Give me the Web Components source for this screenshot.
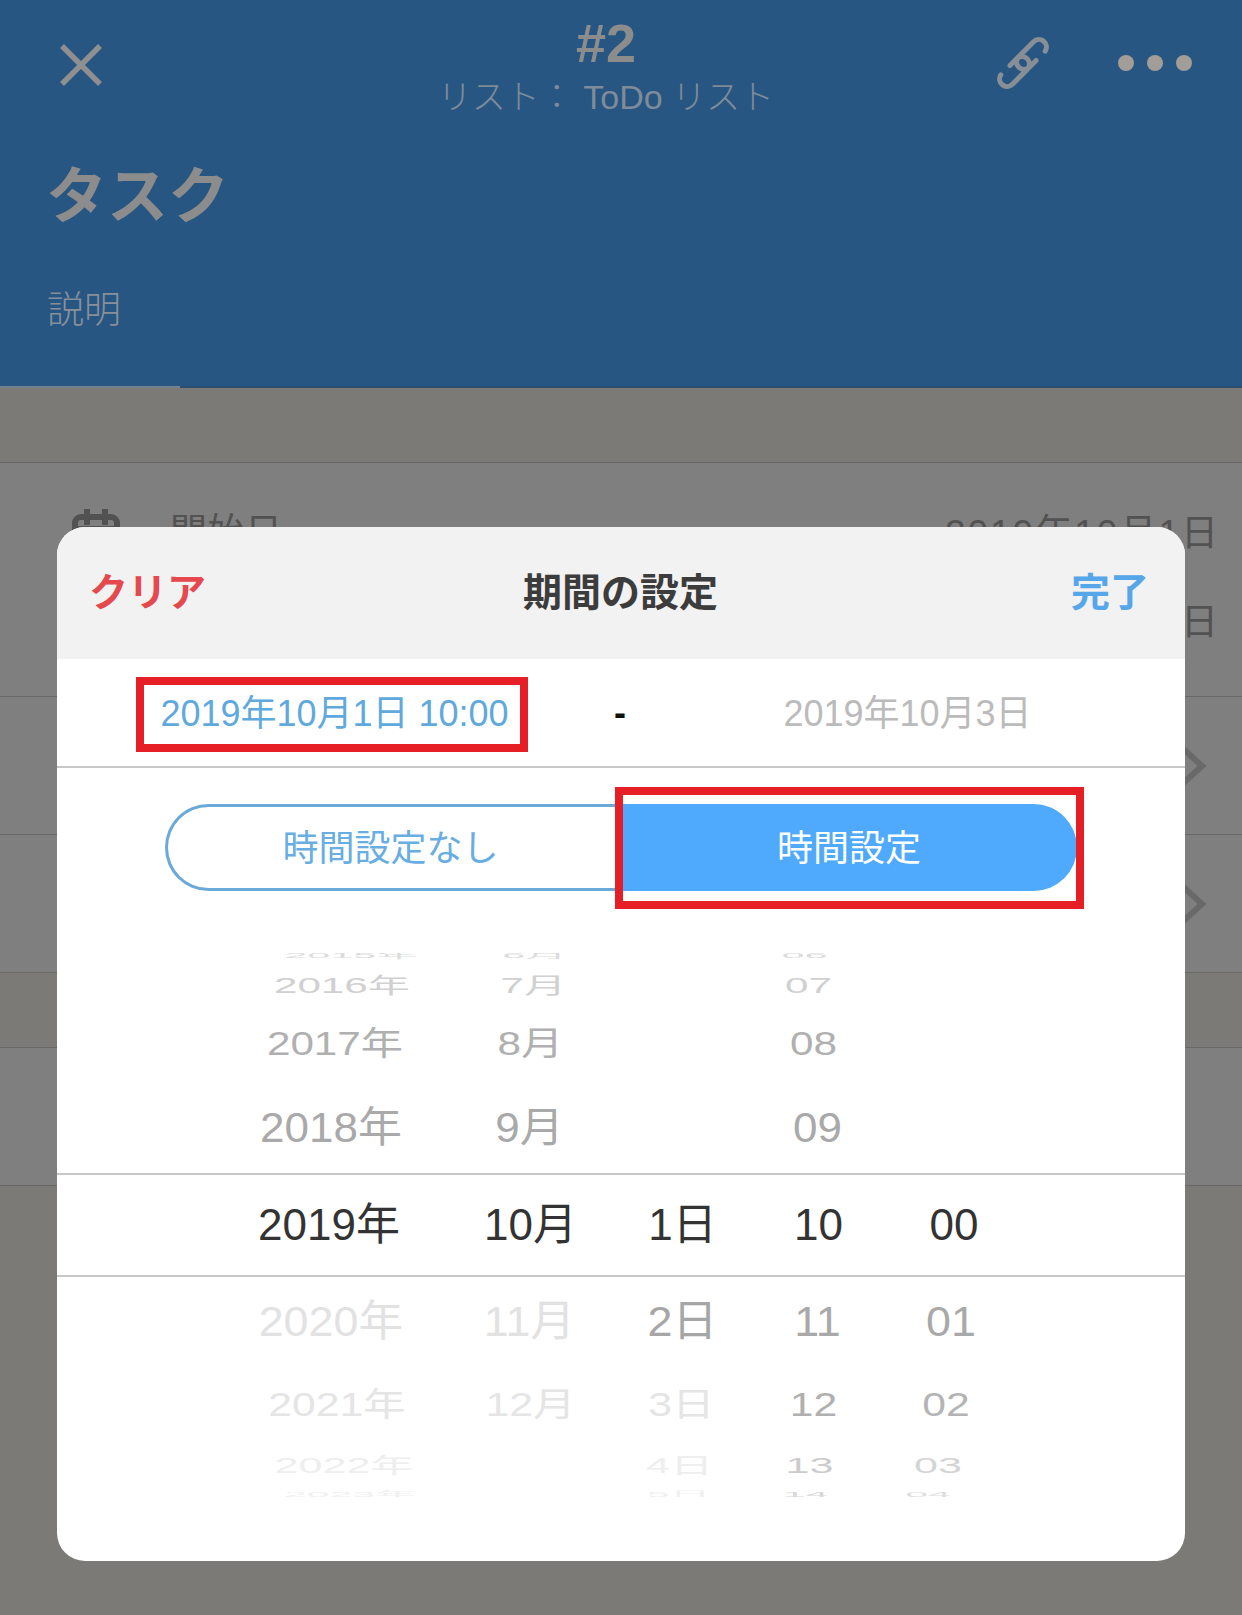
<!DOCTYPE html>
<html lang="ja">
<head>
<meta charset="utf-8">
<title>期間の設定</title>
<style>
  html, body { margin: 0; height: 1615px; overflow: hidden; background: #7b7a77; }
  body { font-family: "Liberation Sans", "Noto Sans CJK JP", sans-serif; }
</style>
</head>
<body>
<task-page>
  <date-modal></date-modal>
</task-page>

<script>
class TaskHeader extends HTMLElement {
  constructor () {
    super()
    this.attachShadow({ mode: 'open' })
  }

  connectedCallback () {
    this.shadowRoot.innerHTML = `
      <style>
        :host { display: block; height: 388px; background: #275682; box-sizing: border-box; position: relative; color: #8c8c8c; }
        .bar { display: grid; grid-template-columns: 370px 354px 1fr; align-items: start; padding: 20px 50px 0 59px; height: 147px; box-sizing: border-box; }
        .close { margin-top: 23px; display: block; }
        .mid { text-align: center; }
        .num { font-size: 54px; font-weight: 700; line-height: 46px; }
        .sub { font-size: 34px; line-height: 40px; color: #7f8b98; font-weight: 300; margin-top: 11px; white-space: nowrap; }
        .actions { display: flex; justify-content: flex-end; align-items: center; gap: 67px; margin-top: 15px; }
        .dots { display: flex; gap: 13px; }
        .dots i { width: 16px; height: 16px; border-radius: 50%; background: #a29d96; }
        .title { font-size: 61px; font-weight: 700; line-height: 70px; padding-left: 46px; margin-top: 15px; }
        .desc { font-size: 37px; line-height: 46px; padding-left: 47px; margin-top: 56px; color: #87909a; font-weight: 300; }
        .edge { position: absolute; left: 0; right: 0; bottom: 0; height: 2px; background: #2d4f70; }
        .edge::before { content: ""; display: block; width: 180px; height: 2px; background: #74828f; }
      </style>
      <div class="bar">
        <svg class="close" width="44" height="44" viewBox="0 0 44 44"><path d="M3 3 41 41M41 3 3 41" stroke="#8f8f8f" stroke-width="5.5" fill="none"/></svg>
        <div class="mid">
          <div class="num">#2</div>
          <div class="sub">リスト： ToDo リスト</div>
        </div>
        <div class="actions">
          <svg width="56" height="56" viewBox="-28 -28 56 56" fill="none" stroke="#878e96" stroke-width="5" stroke-linecap="round">
            <g transform="rotate(-45)">
              <path d="M11 7.5H1.5a7.5 7.5 0 0 1 0-15h21a7.5 7.5 0 0 1 1.5 14.85"/>
              <path d="M-11-7.5h9.500a7.5 7.5 0 0 1 0 15h-21a7.5 7.5 0 0 1-1.500-14.850"/>
            </g>
          </svg>
          <div class="dots"><i></i><i></i><i></i></div>
        </div>
      </div>
      <div class="title">タスク</div>
      <div class="desc">説明</div>
      <div class="edge"></div>
    `
  }
}

class TaskRow extends HTMLElement {
  constructor () {
    super()
    this.attachShadow({ mode: 'open' })
    this.shadowRoot.innerHTML = `
      <style>
        :host { display: block; background: #7f7f7f; border-bottom: 1px solid #686868; box-sizing: border-box; position: relative; }
        :host([band]) { background: #7b7a77; }
        svg { position: absolute; right: 35px; top: 50%; margin-top: -24px; }
      </style>
      <slot></slot>
    `
    if (this.hasAttribute('chevron')) {
      this.shadowRoot.innerHTML += `
        <svg width="30" height="48" viewBox="0 0 30 48" fill="none" stroke="#696969" stroke-width="6">
          <path d="M2 3 25 24 2 45"/>
        </svg>`
    }
  }
}

class DateField extends HTMLElement {
  constructor () {
    super()
    this.attachShadow({ mode: 'open' })
    this.shadowRoot.innerHTML = `
      <style>
        :host { display: flex; align-items: flex-start; height: 100%; box-sizing: border-box; color: #525252; font-size: 37px; letter-spacing: 2px; }
        .icon { margin: 46px 0 0 72px; flex: none; }
        .label { margin: 52px 0 0 50px; line-height: 36px; letter-spacing: .5px; }
        .dates { margin: 53px 22px 0 auto; text-align: right; line-height: 36px; }
        .dates div + div { margin-top: 53px; }
      </style>
      <svg class="icon" width="48" height="48" viewBox="0 0 48 48" fill="none" stroke="#525252" stroke-width="6">
        <rect x="3" y="8" width="42" height="38" rx="6"/>
        <path d="M15 0v16M33 0v16M3 20h42"/>
      </svg>
      <div class="label">開始日</div>
      <div class="dates"><div>2019年10月1日</div><div>2019年10月3日</div></div>
    `
  }
}

class TaskPage extends HTMLElement {
  constructor () {
    super()
    this.attachShadow({ mode: 'open' })
    this.shadowRoot.innerHTML = `
      <style>
        :host { display: block; position: relative; width: 1242px; height: 1615px; overflow: hidden; background: #7b7a77; }
        .r1 { height: 75px; }
        .r2 { height: 234px; }
        .r3, .r4 { height: 138px; }
        .r5 { height: 75px; }
        .r6 { height: 138px; }
      </style>
      <task-header></task-header>
      <task-row class="r1" band></task-row>
      <task-row class="r2"><date-field></date-field></task-row>
      <task-row class="r3" chevron></task-row>
      <task-row class="r4" chevron></task-row>
      <task-row class="r5" band></task-row>
      <task-row class="r6"></task-row>
      <slot></slot>
    `
  }
}

class TimeToggle extends HTMLElement {
  constructor () {
    super()
    this.attachShadow({ mode: 'open' })
    this.shadowRoot.innerHTML = `
      <style>
        :host { display: flex; width: 912px; height: 87px; margin: 36px 0 62px 108px; font-size: 36px; }
        div { display: flex; align-items: center; justify-content: center; box-sizing: border-box; padding-bottom: 6px; }
        .off { width: 458px; color: #68aee2; border: 3px solid #6aa9d8; border-right: 0; border-radius: 44px 0 0 44px; padding-right: 10px; }
        .on { flex: 1; color: #fff; background: #4faafd; border-radius: 0 44px 44px 0; padding-right: 2px; }
      </style>
      <div class="off">時間設定なし</div>
      <div class="on">時間設定</div>
    `
  }
}

// one row of the wheel: height, x / y squeeze, then [text, x drift, colour] per column
const WHEEL = [
  [20, 0.94, 0.18, [['2015年', 22, '#dcdcdc'], ['6月', 4, '#dcdcdc'], null, ['06', -14, '#dcdcdc'], null]],
  [40, 0.96, 0.5, [['2016年', 13, '#d0d0d0'], ['7月', 3, '#d0d0d0'], null, ['07', -10, '#d0d0d0'], null]],
  [78, 0.96, 0.76, [['2017年', 6, '#b0b0b0'], ['8月', 0, '#b0b0b0'], null, ['08', -5, '#b0b0b0'], null]],
  [90, 1, 0.96, [['2018年', 2, '#a9a9a9'], ['9月', -1, '#a9a9a9'], null, ['09', -1, '#a9a9a9'], null]],
  [104, 1, 1, [['2019年', 0, '#333'], ['10月', 0, '#333'], ['1日', 0, '#333'], ['10', 0, '#333'], ['00', 0, '#333']]],
  [88, 1.02, 0.98, [['2020年', 2, '#e2e2e2'], ['11月', -1, '#e2e2e2'], ['2日', 0, '#a6a6a6'], ['11', -1, '#a9a9a9'], ['01', -3, '#a9a9a9']]],
  [80, 0.97, 0.76, [['2021年', 8, '#e5e5e5'], ['12月', 0, '#e5e5e5'], ['3日', -1, '#e5e5e5'], ['12', -5, '#b0b0b0'], ['02', -8, '#b4b4b4']]],
  [40, 0.98, 0.5, [['2022年', 15, '#eeeeee'], null, ['4日', -3, '#eeeeee'], ['13', -9, '#cccccc'], ['03', -16, '#d4d4d4']]],
  [18, 0.93, 0.18, [['2023年', 21, '#f0f0f0'], null, ['5日', -4, '#f0f0f0'], ['14', -13, '#d8d8d8'], ['04', -26, '#dedede']]]
]

class PickerWheel extends HTMLElement {
  constructor () {
    super()
    this.attachShadow({ mode: 'open' })
    const rows = WHEEL.map(([h, sx, sy, cells], i) => `
      <div class="row ${i === 4 ? 'sel' : ''}" style="height:${h}px">
        ${cells.map(c => c
          ? `<span style="color:${c[2]};transform:translateX(${c[1]}px) scale(${sx},${sy})">${c[0]}</span>`
          : '<span></span>').join('')}
      </div>`).join('')
    this.shadowRoot.innerHTML = `
      <style>
        :host { display: block; height: 544px; overflow: hidden; font-size: 44px; }
        .rows { margin-top: -8px; }
        .row { display: grid; grid-template-columns: 190px 213px 91px 181px 90px; grid-template-rows: minmax(0, 1fr); padding-left: 177px; align-items: center; box-sizing: border-box; }
        .sel { border-top: 2px solid #c8c8c8; border-bottom: 2px solid #c8c8c8; }
        span { display: block; text-align: center; line-height: 44px; white-space: nowrap; }
      </style>
      <div class="rows">${rows}</div>
    `
  }
}

class DateModal extends HTMLElement {
  constructor () {
    super()
    this.attachShadow({ mode: 'open' })
    this.shadowRoot.innerHTML = `
      <style>
        :host { display: block; position: absolute; left: 57px; top: 527px; width: 1128px; height: 1034px; background: #fff; border-radius: 28px; overflow: hidden; }
        header { height: 132px; box-sizing: border-box; background: #f2f2f2; display: grid; grid-template-columns: 1fr auto 1fr; align-items: center; padding: 0 36px 8px 32px; font-size: 39px; font-weight: 700; }
        .clear { color: #e5484d; }
        .head { color: #3c3c3c; margin-left: 3px; }
        .done { color: #56a6ea; text-align: right; }
        .dates { height: 109px; box-sizing: border-box; border-bottom: 2px solid #c8c8c8; display: grid; grid-template-columns: 397px 174px 398px; padding: 0 0 6px 79px; align-items: center; text-align: center; font-size: 36px; }
        .from { color: #5fa9dd; }
        .dash { color: #111; font-weight: 700; padding-top: 6px; }
        .to { color: #bbb; padding-left: 3px; }
        .mark { position: absolute; box-sizing: border-box; border: 8px solid #e61f26; pointer-events: none; }
        .m1 { left: 79px; top: 150px; width: 392px; height: 75px; }
        .m2 { left: 558px; top: 260px; width: 469px; height: 122px; }
      </style>
      <header>
        <div class="clear">クリア</div>
        <div class="head">期間の設定</div>
        <div class="done">完了</div>
      </header>
      <div class="dates">
        <div class="from">2019年10月1日 10:00</div>
        <div class="dash">-</div>
        <div class="to">2019年10月3日</div>
      </div>
      <time-toggle></time-toggle>
      <picker-wheel></picker-wheel>
      <div class="mark m1"></div>
      <div class="mark m2"></div>
    `
  }
}

customElements.define('task-header', TaskHeader)
customElements.define('task-row', TaskRow)
customElements.define('date-field', DateField)
customElements.define('task-page', TaskPage)
customElements.define('time-toggle', TimeToggle)
customElements.define('picker-wheel', PickerWheel)
customElements.define('date-modal', DateModal)
</script>
</body>
</html>
